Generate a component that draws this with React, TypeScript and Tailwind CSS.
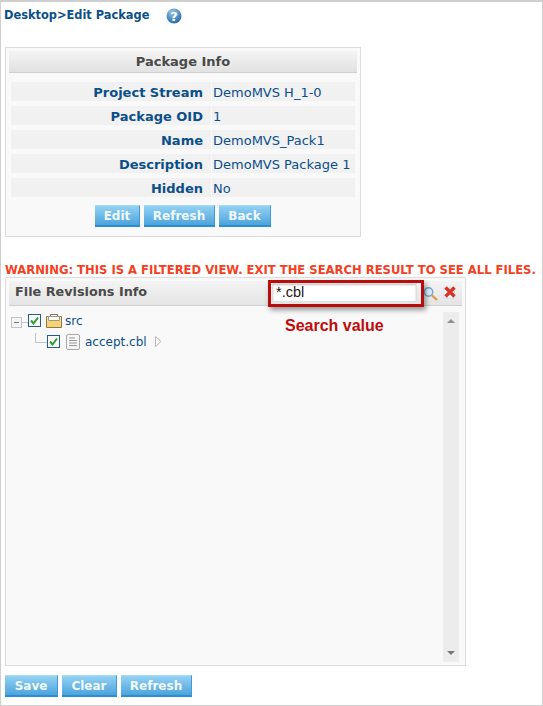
import type { ReactNode } from 'react';

const font = "font-['DejaVu_Sans',sans-serif]";

const infoRows = [
  { label: 'Project Stream', value: 'DemoMVS H_1-0' },
  { label: 'Package OID', value: '1' },
  { label: 'Name', value: 'DemoMVS_Pack1' },
  { label: 'Description', value: 'DemoMVS Package 1' },
  { label: 'Hidden', value: 'No' },
];

function BlueButton({ children, width }: { children: ReactNode; width: string }) {
  return (
    <button
      className={`${width} h-[22px] border-t border-t-[#a8dcf5] border-b-2 border-b-[#2a8fd0] border-r border-r-[#3d9ad6] bg-gradient-to-b from-[#93d2f3] to-[#4ba3dc] pt-px text-center text-[12px] leading-[19px] font-bold text-[#f2f9fd] ${font}`}
    >
      {children}
    </button>
  );
}

function TreeCheck() {
  return (
    <span className="flex h-[13px] w-[13px] shrink-0 items-center justify-center border border-[#1f5f8f] bg-white">
      <svg width="9" height="9" viewBox="0 0 9 9">
        <path d="M1 4.5 L3.5 7.5 L8 1.5" fill="none" stroke="#2aa02a" strokeWidth="2" />
      </svg>
    </span>
  );
}

function FolderIcon() {
  return (
    <svg width="16" height="14" viewBox="0 0 16 14">
      <path d="M0.5 2.5 h15 v11 h-15 z" fill="#fbe6a8" stroke="#8a7a4a" />
      <path d="M4.5 2.5 v-2 h7 v2" fill="none" stroke="#8a7a4a" />
      <path d="M2.5 2.5 h11 v4 h-11 z" fill="#ffffff" stroke="#9a9a8a" />
      <path d="M1 7 h14 v6 h-14 z" fill="#f9d274" />
    </svg>
  );
}

function FileIcon() {
  return (
    <svg width="14" height="16" viewBox="0 0 14 16">
      <rect x="0.5" y="0.5" width="13" height="15" rx="1.5" fill="#f6f6f6" stroke="#a8a8a8" />
      <path d="M3 4 h6 M3 6.5 h8 M3 9 h8 M3 11.5 h8" stroke="#9a9a9a" strokeWidth="1.2" />
    </svg>
  );
}

export default function App() {
  return (
    <div className={`h-[706px] w-[543px] overflow-hidden border-t-2 border-r border-b border-l border-[#cfcfcf] bg-white ${font}`}>
      {/* Breadcrumb */}
      <div className="flex h-[24px] items-center pl-[3px] pt-[3px]">
        <span className="text-[11.4px] font-bold text-[#0b4f8a]">Desktop&gt;Edit Package</span>
        <svg className="ml-[17px]" width="16" height="16" viewBox="0 0 16 16">
          <defs>
            <radialGradient id="help" cx="40%" cy="25%" r="80%">
              <stop offset="0%" stopColor="#9cc6ea" />
              <stop offset="100%" stopColor="#1f66a8" />
            </radialGradient>
          </defs>
          <circle cx="8" cy="8" r="7.5" fill="url(#help)" />
          <text x="8" y="12.5" textAnchor="middle" fontSize="13" fontWeight="700" fill="#ffffff">?</text>
        </svg>
      </div>

      {/* Package Info */}
      <div className="ml-[4px] mt-[21px] h-[190px] w-[356px] border border-[#dcdcdc] bg-[#f9f9f9] p-[3px]">
        <div className="h-[22px] border-b border-[#cfcfcf] bg-gradient-to-b from-[#f4f4f4] to-[#e2e2e2] text-center text-[13px] leading-[21px] font-bold text-[#4a4a4a]">
          Package Info
        </div>
        <div className="mx-[2px] mt-[9px] flex flex-col gap-[5px]">
          {infoRows.map((row) => (
            <div key={row.label} className="flex h-[19px] gap-px text-[13px] leading-[21px] text-[#0b4f8a]">
              <div className="w-[200px] bg-[#f1f1f1] pr-[8px] text-right font-bold">{row.label}</div>
              <div className="w-[143px] bg-[#f1f1f1] pl-px whitespace-nowrap">{row.value}</div>
            </div>
          ))}
        </div>
        <div className="mt-[8px] flex justify-center gap-[4px]">
          <BlueButton width="w-[45px]">Edit</BlueButton>
          <BlueButton width="w-[71px]">Refresh</BlueButton>
          <BlueButton width="w-[52px]">Back</BlueButton>
        </div>
      </div>

      {/* Warning */}
      <div className="ml-[4px] mt-[27px] h-[13px] text-[11.6px] leading-[13px] font-bold whitespace-nowrap text-[#f4401f]">
        WARNING: THIS IS A FILTERED VIEW. EXIT THE SEARCH RESULT TO SEE ALL FILES.
      </div>

      {/* File Revisions */}
      <div className="relative ml-[4px] h-[389px] w-[461px] border border-[#dcdcdc] bg-[#f9f9f9] p-[3px]">
        <div className="flex h-[25px] items-start border-b border-[#cfcfcf] bg-gradient-to-b from-[#f4f4f4] to-[#e4e4e4] pl-[6px]">
          <span className="w-[131px] text-[12.8px] leading-[21px] font-bold whitespace-nowrap text-[#4a4a4a]">File Revisions Info</span>
          <div className="ml-[126px] mt-[2px] flex h-[19px] w-[145px] items-center border border-[#dedede] bg-white pl-[3px] font-['Liberation_Sans',sans-serif] text-[14.5px] text-[#1a1a1a] shadow-[inset_0_1px_2px_rgba(0,0,0,0.25)]">
            *.cbl
          </div>
          <svg className="ml-[6px] mt-[6px]" width="15" height="14" viewBox="0 0 15 14">
            <circle cx="5.5" cy="5" r="4.2" fill="#dbeefa" stroke="#6ea6cf" strokeWidth="1.4" />
            <path d="M8.5 8 L14 13" stroke="#e09a3a" strokeWidth="2.2" />
          </svg>
          <svg className="ml-[5px] mt-[4px]" width="14" height="14" viewBox="0 0 14 14">
            <rect x="1" y="3" width="10" height="10" fill="#ffffff" stroke="#cfe0ee" />
            <path d="M2.5 2.5 L11.5 11.5 M11.5 2.5 L2.5 11.5" stroke="#d9342b" strokeWidth="3.4" />
          </svg>
        </div>

        <div className="flex h-[354px]">
          {/* Tree */}
          <div className="relative w-[434px] pl-[2px] pt-[6px] text-[12px] text-[#0b4f8a]">
            <div className="flex h-[17px] items-center">
              <span className="mt-[4px] flex h-[11px] w-[11px] items-center justify-center border border-[#c4c4c4] bg-[#f4f4f4]">
                <span className="h-px w-[5px] bg-[#777777]" />
              </span>
              <span className="mt-[4px] h-px w-[6px] bg-[#c4c4c4]" />
              <TreeCheck />
              <span className="ml-[5px] flex"><FolderIcon /></span>
              <span className="ml-[3px]">src</span>
            </div>
            <div className="mt-[4px] flex h-[17px] items-center pl-[24px]">
              <span className="absolute top-[27px] left-[26px] h-[10px] w-[12px] border-b border-l border-[#c4c4c4]" />
              <span className="ml-[12px] flex"><TreeCheck /></span>
              <span className="ml-[6px] flex"><FileIcon /></span>
              <span className="ml-[5px]">accept.cbl</span>
              <svg className="ml-[8px]" width="7" height="11" viewBox="0 0 7 11">
                <path d="M0.5 0.5 L6 5.5 L0.5 10.5 Z" fill="#ffffff" stroke="#b8b8b8" />
              </svg>
            </div>
          </div>

          {/* Scrollbar */}
          <div className="mt-[6px] flex h-[350px] w-[16px] flex-col items-center justify-between border border-[#eeeeee] bg-[#ececec] py-[6px]">
            <span className="h-0 w-0 border-x-[4px] border-b-[4px] border-x-transparent border-b-[#8f8f8f]" />
            <span className="h-0 w-0 border-x-[4px] border-t-[4px] border-x-transparent border-t-[#777777]" />
          </div>
        </div>

        {/* Annotation */}
        <div className="pointer-events-none absolute top-[2px] left-[262px] h-[27px] w-[156px] border-[3px] border-[#b80d0d] shadow-[2px_3px_5px_rgba(0,0,0,0.4)]" />
        <span className="absolute top-[39px] left-[279px] font-['Liberation_Sans',sans-serif] text-[16px] leading-[18px] font-bold text-[#bf0b0b]">
          Search value
        </span>
      </div>

      {/* Actions */}
      <div className="ml-[4px] mt-[9px] flex gap-[4px]">
        <BlueButton width="w-[53px]">Save</BlueButton>
        <BlueButton width="w-[55px]">Clear</BlueButton>
        <BlueButton width="w-[71px]">Refresh</BlueButton>
      </div>
    </div>
  );
}
